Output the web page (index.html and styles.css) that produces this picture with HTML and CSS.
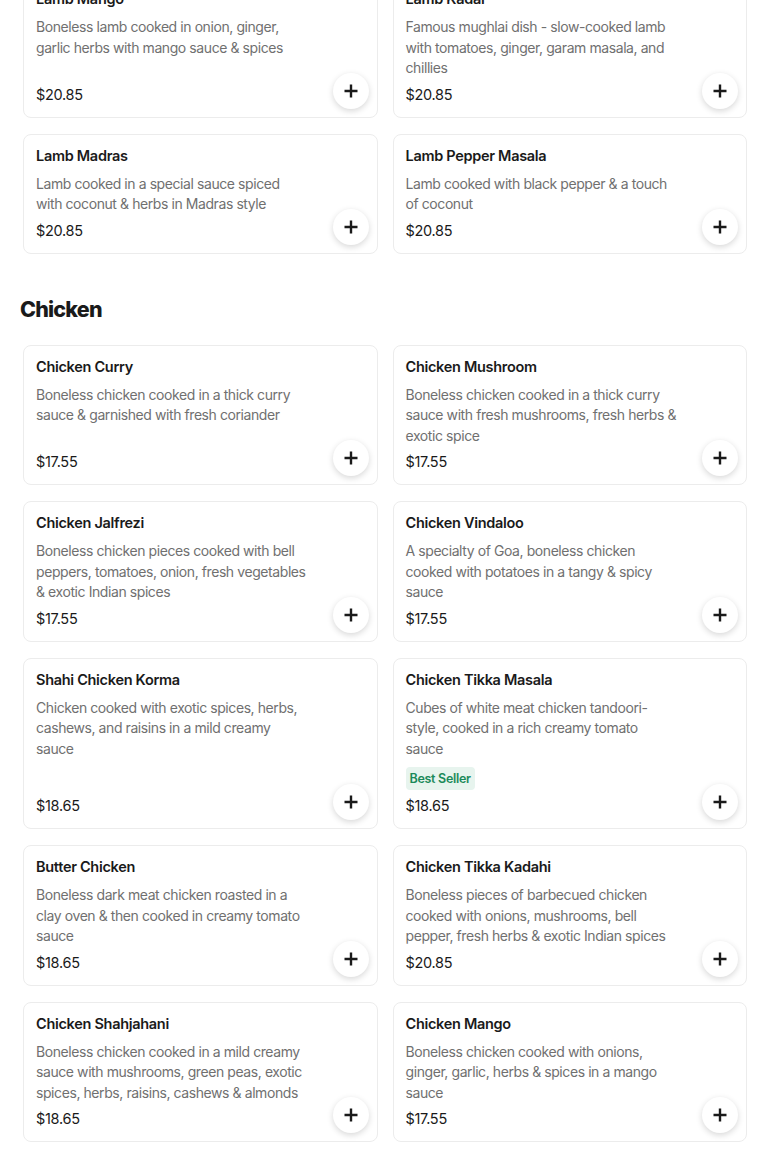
FILE: index.html
```html
<!DOCTYPE html>
<html>
<head>
<meta charset="utf-8">
<link rel="stylesheet" href="styles.css">
</head>
<body>
<main class="page">
  <section class="section first">
    <div class="grid">
      <article class="card">
        <h3 class="title">Lamb Mango</h3>
        <p class="desc">Boneless lamb cooked in onion, ginger, garlic herbs with mango sauce &amp; spices</p>
        <div class="price">$20.85</div>
        <button class="add"><svg viewBox="0 0 16 16"><path d="M8 1.5v13M1.5 8h13"/></svg></button>
      </article>
      <article class="card">
        <h3 class="title">Lamb Kadai</h3>
        <p class="desc">Famous mughlai dish - slow-cooked lamb with tomatoes, ginger, garam masala, and chillies</p>
        <div class="price">$20.85</div>
        <button class="add"><svg viewBox="0 0 16 16"><path d="M8 1.5v13M1.5 8h13"/></svg></button>
      </article>
      <article class="card">
        <h3 class="title">Lamb Madras</h3>
        <p class="desc">Lamb cooked in a special sauce spiced with coconut &amp; herbs in Madras style</p>
        <div class="price">$20.85</div>
        <button class="add"><svg viewBox="0 0 16 16"><path d="M8 1.5v13M1.5 8h13"/></svg></button>
      </article>
      <article class="card">
        <h3 class="title">Lamb Pepper Masala</h3>
        <p class="desc">Lamb cooked with black pepper &amp; a touch of coconut</p>
        <div class="price">$20.85</div>
        <button class="add"><svg viewBox="0 0 16 16"><path d="M8 1.5v13M1.5 8h13"/></svg></button>
      </article>
    </div>
  </section>

  <section class="section">
    <h2 class="heading">Chicken</h2>
    <div class="grid">
      <article class="card">
        <h3 class="title">Chicken Curry</h3>
        <p class="desc">Boneless chicken cooked in a thick curry sauce &amp; garnished with fresh coriander</p>
        <div class="price">$17.55</div>
        <button class="add"><svg viewBox="0 0 16 16"><path d="M8 1.5v13M1.5 8h13"/></svg></button>
      </article>
      <article class="card">
        <h3 class="title">Chicken Mushroom</h3>
        <p class="desc">Boneless chicken cooked in a thick curry sauce with fresh mushrooms, fresh herbs &amp; exotic spice</p>
        <div class="price">$17.55</div>
        <button class="add"><svg viewBox="0 0 16 16"><path d="M8 1.5v13M1.5 8h13"/></svg></button>
      </article>
      <article class="card">
        <h3 class="title">Chicken Jalfrezi</h3>
        <p class="desc">Boneless chicken pieces cooked with bell peppers, tomatoes, onion, fresh vegetables &amp; exotic Indian spices</p>
        <div class="price">$17.55</div>
        <button class="add"><svg viewBox="0 0 16 16"><path d="M8 1.5v13M1.5 8h13"/></svg></button>
      </article>
      <article class="card">
        <h3 class="title">Chicken Vindaloo</h3>
        <p class="desc">A specialty of Goa, boneless chicken cooked with potatoes in a tangy &amp; spicy sauce</p>
        <div class="price">$17.55</div>
        <button class="add"><svg viewBox="0 0 16 16"><path d="M8 1.5v13M1.5 8h13"/></svg></button>
      </article>
      <article class="card">
        <h3 class="title">Shahi Chicken Korma</h3>
        <p class="desc">Chicken cooked with exotic spices, herbs, cashews, and raisins in a mild creamy sauce</p>
        <div class="price">$18.65</div>
        <button class="add"><svg viewBox="0 0 16 16"><path d="M8 1.5v13M1.5 8h13"/></svg></button>
      </article>
      <article class="card">
        <h3 class="title">Chicken Tikka Masala</h3>
        <p class="desc">Cubes of white meat chicken tandoori-style, cooked in a rich creamy tomato sauce</p>
        <span class="badge">Best Seller</span>
        <div class="price">$18.65</div>
        <button class="add"><svg viewBox="0 0 16 16"><path d="M8 1.5v13M1.5 8h13"/></svg></button>
      </article>
      <article class="card">
        <h3 class="title">Butter Chicken</h3>
        <p class="desc">Boneless dark meat chicken roasted in a clay oven &amp; then cooked in creamy tomato sauce</p>
        <div class="price">$18.65</div>
        <button class="add"><svg viewBox="0 0 16 16"><path d="M8 1.5v13M1.5 8h13"/></svg></button>
      </article>
      <article class="card">
        <h3 class="title">Chicken Tikka Kadahi</h3>
        <p class="desc">Boneless pieces of barbecued chicken cooked with onions, mushrooms, bell pepper, fresh herbs &amp; exotic Indian spices</p>
        <div class="price">$20.85</div>
        <button class="add"><svg viewBox="0 0 16 16"><path d="M8 1.5v13M1.5 8h13"/></svg></button>
      </article>
      <article class="card">
        <h3 class="title">Chicken Shahjahani</h3>
        <p class="desc">Boneless chicken cooked in a mild creamy sauce with mushrooms, green peas, exotic spices, herbs, raisins, cashews &amp; almonds</p>
        <div class="price">$18.65</div>
        <button class="add"><svg viewBox="0 0 16 16"><path d="M8 1.5v13M1.5 8h13"/></svg></button>
      </article>
      <article class="card">
        <h3 class="title">Chicken Mango</h3>
        <p class="desc">Boneless chicken cooked with onions, ginger, garlic, herbs &amp; spices in a mango sauce</p>
        <div class="price">$17.55</div>
        <button class="add"><svg viewBox="0 0 16 16"><path d="M8 1.5v13M1.5 8h13"/></svg></button>
      </article>
    </div>
  </section>
</main>
</body>
</html>
```

FILE: styles.css
```css
* { box-sizing: border-box; }
html, body { margin: 0; padding: 0; background: #fff; }
body {
  font-family: Inter, "Noto Sans", sans-serif;
  color: #1c1c1c;
  overflow: hidden;
}
.page {
  padding: 0 20px;
  margin-top: -23px;
}
.section.first { margin-bottom: 41px; }
.heading {
  margin: 0 0 22px 0;
  font-size: 21.5px;
  line-height: 28px;
  font-weight: 800;
  letter-spacing: -0.8px;
  color: #1a1a1a;
}
.grid {
  display: grid;
  grid-template-columns: 1fr 1fr;
  column-gap: 15px;
  row-gap: 16px;
  padding: 0 3px;
}
.card {
  position: relative;
  display: flex;
  flex-direction: column;
  align-items: flex-start;
  border: 1px solid #ececec;
  border-radius: 8px;
  padding: 11px 12px 12px 12px;
  background: #fff;
}
.title {
  margin: 0;
  font-size: 14.5px;
  line-height: 20px;
  font-weight: 600;
  letter-spacing: -0.3px;
  color: #1a1a1a;
}
.desc {
  margin: 8px 0 0 0;
  width: 272px;
  font-size: 14px;
  line-height: 20.5px;
  letter-spacing: -0.42px;
  color: #707070;
}
.badge {
  margin-top: 8px;
  padding: 0 4px;
  height: 23px;
  line-height: 23px;
  border-radius: 4px;
  background: #e7f4ee;
  color: #1b8a5a;
  font-size: 12.5px;
  font-weight: 600;
  letter-spacing: -0.3px;
}
.price {
  margin-top: auto;
  padding-top: 6px;
  font-size: 14.5px;
  line-height: 20px;
  letter-spacing: -0.3px;
  color: #1a1a1a;
}
.add {
  position: absolute;
  right: 8px;
  bottom: 8px;
  width: 36px;
  height: 36px;
  border: none;
  border-radius: 50%;
  background: #fff;
  box-shadow: 0 2px 6px rgba(0,0,0,0.16);
  display: flex;
  align-items: center;
  justify-content: center;
  padding: 0;
}
.add svg {
  width: 16px;
  height: 16px;
  stroke: #1a1a1a;
  stroke-width: 2.4;
  fill: none;
}
```
